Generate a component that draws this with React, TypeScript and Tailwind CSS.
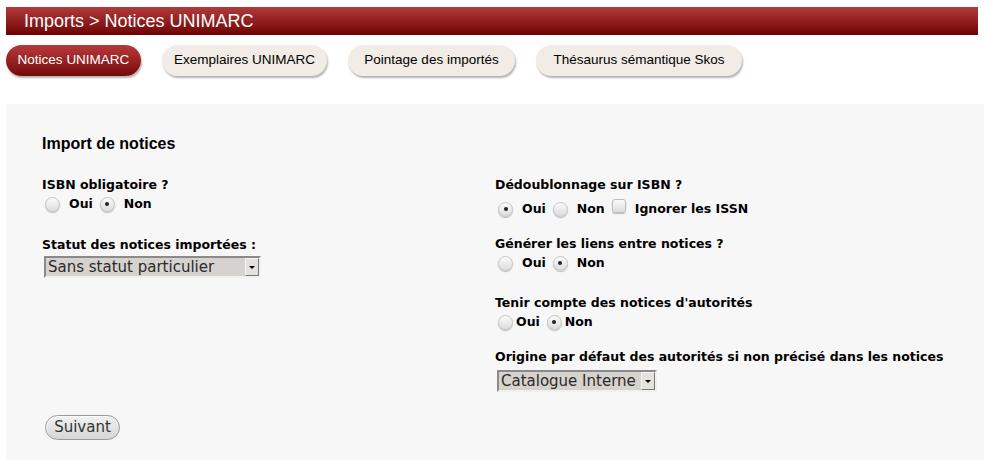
import React from "react";

const onglets = [
  { nom: "Notices UNIMARC", w: "w-[135px]" },
  { nom: "Exemplaires UNIMARC", w: "w-[165px]" },
  { nom: "Pointage des importés", w: "w-[167px]" },
  { nom: "Thésaurus sémantique Skos", w: "w-[206px]" },
];

function Radio({ checked }: { checked?: boolean }) {
  return (
    <span className="inline-flex h-[15px] w-[15px] shrink-0 items-center justify-center rounded-full border border-[#c4c4c4] bg-gradient-to-b from-[#fbfbfb] to-[#dcdcdc] shadow-[0_1px_1px_rgba(0,0,0,0.25)]">
      {checked && <span className="h-[4px] w-[4px] rounded-full bg-[#222]" />}
    </span>
  );
}

function Choix({ items, gap = "gap-[9px]" }: { items: { label: string; checked?: boolean; box?: boolean }[]; gap?: string }) {
  return (
    <div className="flex items-center gap-[7px] pl-[3px]">
      {items.map((it) => (
        <label key={it.label} className={`flex items-center ${gap} ${labelCls}`}>
          {it.box ? (
            <span className="h-[14px] w-[14px] -translate-y-[3px] rounded-[3px] border border-[#bdbdbd] bg-gradient-to-b from-[#fbfbfb] to-[#dcdcdc] shadow-[0_1px_1px_rgba(0,0,0,0.25)]" />
          ) : (
            <Radio checked={it.checked} />
          )}
          {it.label}
        </label>
      ))}
    </div>
  );
}

function Select({ value, width }: { value: string; width: string }) {
  return (
    <div
      className={`ml-[2px] flex h-[22px] ${width} items-stretch border-2 border-t-[#8a8a8a] border-l-[#8a8a8a] border-r-[#f0f0f0] border-b-[#f0f0f0] bg-[#d6d3cf]`}
    >
      <span className="flex-1 overflow-hidden whitespace-nowrap pl-[2px] text-[15px] leading-[18px] text-[#2a2a2a] [font-family:'DejaVu_Sans',sans-serif]">
        {value}
      </span>
      <span className="flex w-[14px] items-center justify-center border border-t-[#f4f4f4] border-l-[#f4f4f4] border-r-[#777] border-b-[#777] bg-[#e4e2df]">
        <span className="h-0 w-0 border-x-[3px] border-t-[3px] border-x-transparent border-t-black" />
      </span>
    </div>
  );
}

const labelCls = "text-[12.5px] font-bold leading-4 text-black [font-family:'DejaVu_Sans',sans-serif]";

export default function App() {
  return (
    <div className="h-[460px] w-[984px] overflow-hidden bg-white [font-family:'Liberation_Sans',Arial,sans-serif]">
      <div className="mx-[6px] mt-[7px] flex h-[28px] items-center bg-gradient-to-b from-[#b3393b] to-[#6f0000] pl-[18px] text-[18px] text-white">
        Imports &gt; Notices UNIMARC
      </div>

      <div className="ml-[6px] mt-[10px] flex gap-[21px]">
        {onglets.map((o, i) => (
          <div
            key={o.nom}
            className={
              i === 0
                ? `flex h-[31px] ${o.w} items-center justify-center rounded-full bg-gradient-to-b from-[#b8393b] to-[#770708] text-[13.5px] text-white shadow-[1px_2px_2px_rgba(0,0,0,0.3)]`
                : `flex h-[31px] ${o.w} items-center justify-center rounded-full bg-[#f1ece5] text-[13.5px] text-black shadow-[1px_2px_2px_rgba(0,0,0,0.3)]`
            }
          >
            {o.nom}
          </div>
        ))}
      </div>

      <div className="ml-[6px] mt-[28px] h-[400px] bg-[#f7f7f7] pl-[36px] pt-[31px]">
        <h3 className="text-[16px] font-bold leading-[18px] text-black">Import de notices</h3>

        <div className="mt-[24px] grid grid-cols-[453px_1fr]">
          <div className="flex flex-col">
            <div className={labelCls}>ISBN obligatoire ?</div>
            <div className="mt-[3px]">
              <Choix items={[{ label: "Oui" }, { label: "Non", checked: true }]} />
            </div>
            <div className={`${labelCls} mt-[25px]`}>Statut des notices importées :</div>
            <div className="mt-[3px]">
              <Select value="Sans statut particulier" width="w-[217px]" />
            </div>
          </div>

          <div className="flex flex-col">
            <div className={labelCls}>Dédoublonnage sur ISBN ?</div>
            <div className="mt-[8px]">
              <Choix
                items={[{ label: "Oui", checked: true }, { label: "Non" }, { label: "Ignorer les ISSN", box: true }]}
              />
            </div>
            <div className={`${labelCls} mt-[19px]`}>Générer les liens entre notices ?</div>
            <div className="mt-[3px]">
              <Choix items={[{ label: "Oui" }, { label: "Non", checked: true }]} />
            </div>
            <div className={`${labelCls} mt-[24px]`}>Tenir compte des notices d'autorités</div>
            <div className="mt-[3px]">
              <Choix gap="gap-[3px]" items={[{ label: "Oui" }, { label: "Non", checked: true }]} />
            </div>
            <div className={`${labelCls} mt-[19px]`}>Origine par défaut des autorités si non précisé dans les notices</div>
            <div className="mt-[5px]">
              <Select value="Catalogue Interne" width="w-[160px]" />
            </div>
          </div>
        </div>

        <button className="ml-[3px] mt-[23px] h-[25px] w-[75px] rounded-full border border-[#9a9a9a] bg-gradient-to-b from-[#f2f2f2] to-[#d6d6d6] text-[15px] text-[#333] shadow-[inset_1px_1px_1px_rgba(255,255,255,0.8)] [font-family:'DejaVu_Sans',sans-serif]">
          Suivant
        </button>
      </div>
    </div>
  );
}
